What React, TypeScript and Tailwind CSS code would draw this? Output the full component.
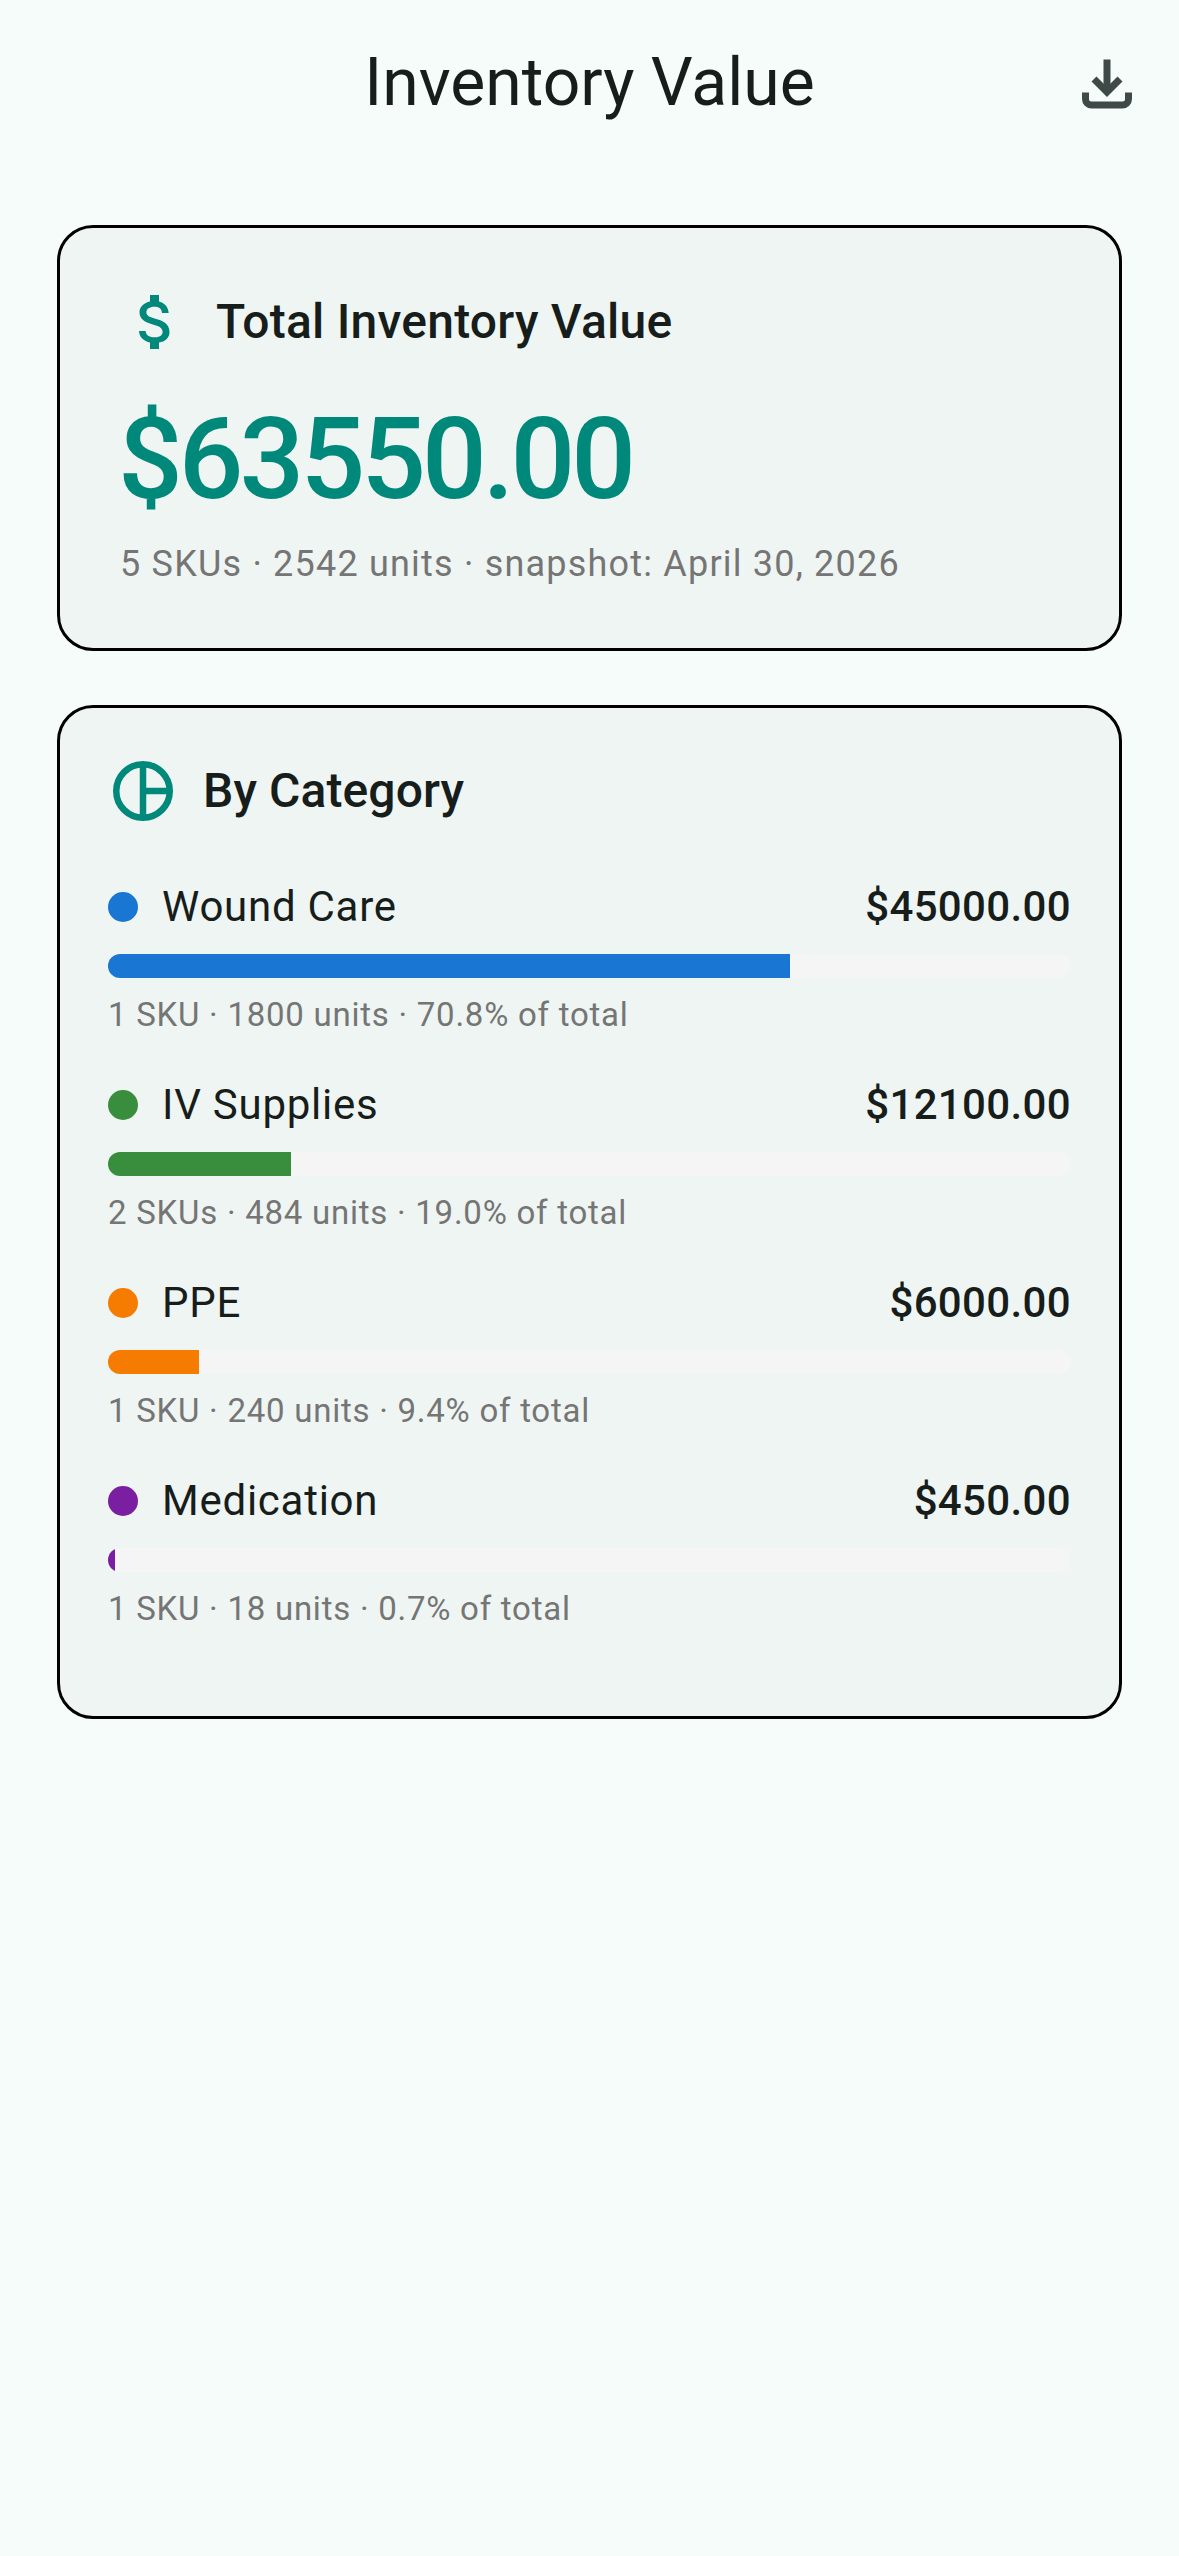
const categories = [
  { name: "Wound Care", value: "$45000.00", meta: "1 SKU · 1800 units · 70.8% of total", pct: 70.8, dot: "bg-[#1976d2]" },
  { name: "IV Supplies", value: "$12100.00", meta: "2 SKUs · 484 units · 19.0% of total", pct: 19.0, dot: "bg-[#388e3c]" },
  { name: "PPE", value: "$6000.00", meta: "1 SKU · 240 units · 9.4% of total", pct: 9.4, dot: "bg-[#f57c00]" },
  { name: "Medication", value: "$450.00", meta: "1 SKU · 18 units · 0.7% of total", pct: 0.7, dot: "bg-[#7b1fa2]" },
];

function DownloadIcon() {
  return (
    <svg width="72" height="72" viewBox="0 0 72 72" fill="none" stroke="#3f4947" strokeWidth="7">
      <path d="M36 12.5V44" />
      <path d="M23 32L36 45L49 32" />
      <path d="M14.5 45.5V52a6 6 0 0 0 6 6H51.5a6 6 0 0 0 6-6V45.5" />
    </svg>
  );
}

function DollarIcon() {
  return (
    <svg width="72" height="72" viewBox="0 0 24 24" fill="#00897b">
      <path d="M11.8 10.9c-2.27-.59-3-1.2-3-2.15 0-1.09 1.01-1.85 2.7-1.85 1.78 0 2.44.85 2.5 2.1h2.21c-.07-1.72-1.12-3.3-3.21-3.81V3h-3v2.16c-1.94.42-3.5 1.68-3.5 3.61 0 2.31 1.91 3.46 4.7 4.13 2.5.6 3 1.48 3 2.41 0 .69-.49 1.79-2.7 1.79-2.06 0-2.87-.92-2.98-2.1h-2.2c.12 2.19 1.76 3.42 3.68 3.83V21h3v-2.15c1.95-.37 3.5-1.5 3.5-3.55 0-2.84-2.43-3.81-4.7-4.4z" />
    </svg>
  );
}

function PieIcon() {
  return (
    <svg width="72" height="72" viewBox="0 0 72 72" fill="none" stroke="#00897b" strokeWidth="6.5">
      <circle cx="36" cy="36" r="26.75" />
      <path d="M36 9V63" />
      <path d="M36 36H63" />
    </svg>
  );
}

export default function App() {
  return (
    <div className="min-h-screen bg-[#f6fcf9] font-['Roboto',sans-serif] text-[#171d1b]">
      <header className="grid grid-cols-[1fr_auto_1fr] items-center h-[165px] px-[36px]">
        <div />
        <h1 className="text-[66px] leading-[88px] font-normal">Inventory Value</h1>
        <div className="flex justify-end">
          <DownloadIcon />
        </div>
      </header>

      <main className="flex flex-col gap-[54px] px-[57px] pt-[60px]">
        <section className="h-[426px] rounded-[36px] border-[3px] border-black bg-[#eff5f3] pl-[60px] pt-[58px]">
          <div className="flex items-center gap-[24px]">
            <DollarIcon />
            <span className="text-[48px] leading-[72px] font-medium tracking-[0.24px]">Total Inventory Value</span>
          </div>
          <div className="mt-[38px] -ml-[2px] text-[114px] leading-[126px] font-medium tracking-[-4px] text-[#00897b]">$63550.00</div>
          <div className="mt-[18px] text-[36px] leading-[48px] tracking-[1.2px] text-[#757575]">
            5 SKUs · 2542 units · snapshot: April 30, 2026
          </div>
        </section>

        <section className="h-[1014px] rounded-[36px] border-[3px] border-black bg-[#eff5f3] px-[48px] pt-[47px]">
          <div className="flex items-center gap-[24px] -ml-[1px] mb-[50px]">
            <PieIcon />
            <span className="text-[48px] leading-[72px] font-medium tracking-[0.1px]">By Category</span>
          </div>
          <div className="flex flex-col">
            {categories.map((c) => (
              <div key={c.name} className="h-[198px]">
                <div className="flex items-center h-[60px]">
                  <span className={`w-[30px] h-[30px] rounded-full ${c.dot}`} />
                  <span className="ml-[24px] text-[42px] leading-[60px] tracking-[0.75px]">{c.name}</span>
                  <span className="ml-auto text-[42px] leading-[60px] font-medium tracking-[0.35px]">{c.value}</span>
                </div>
                <div className="mt-[17px] h-[24px] rounded-[12px] bg-[#f5f5f5] overflow-hidden">
                  <div className={`h-full ${c.dot}`} style={{ width: `${c.pct}%` }} />
                </div>
                <div className="mt-[13px] text-[33px] leading-[48px] tracking-[0.75px] text-[#757575]">{c.meta}</div>
              </div>
            ))}
          </div>
        </section>
      </main>
    </div>
  );
}
